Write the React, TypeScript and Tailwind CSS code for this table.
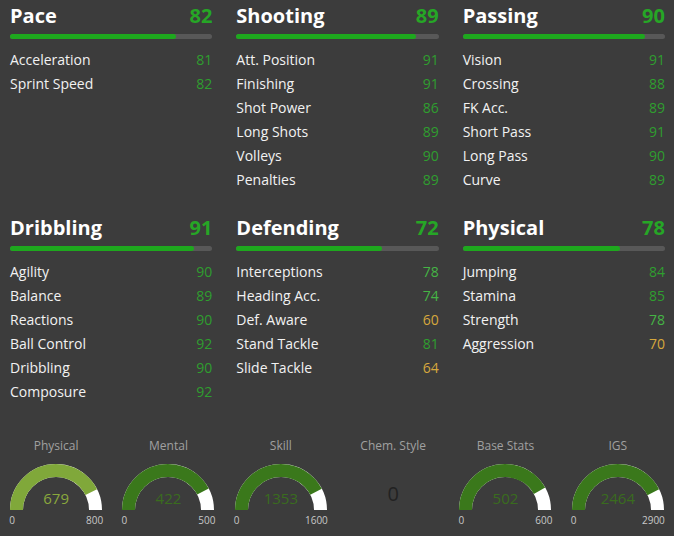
import React from 'react';

type Attr = { name: string; value: number };
type Group = { title: string; value: number; attrs: Attr[] };

const groups: Group[] = [
    { title: 'Pace', value: 82, attrs: [{ name: 'Acceleration', value: 81 }, { name: 'Sprint Speed', value: 82 }] },
    {
        title: 'Shooting', value: 89, attrs: [
            { name: 'Att. Position', value: 91 }, { name: 'Finishing', value: 91 }, { name: 'Shot Power', value: 86 },
            { name: 'Long Shots', value: 89 }, { name: 'Volleys', value: 90 }, { name: 'Penalties', value: 89 },
        ],
    },
    {
        title: 'Passing', value: 90, attrs: [
            { name: 'Vision', value: 91 }, { name: 'Crossing', value: 88 }, { name: 'FK Acc.', value: 89 },
            { name: 'Short Pass', value: 91 }, { name: 'Long Pass', value: 90 }, { name: 'Curve', value: 89 },
        ],
    },
    {
        title: 'Dribbling', value: 91, attrs: [
            { name: 'Agility', value: 90 }, { name: 'Balance', value: 89 }, { name: 'Reactions', value: 90 },
            { name: 'Ball Control', value: 92 }, { name: 'Dribbling', value: 90 }, { name: 'Composure', value: 92 },
        ],
    },
    {
        title: 'Defending', value: 72, attrs: [
            { name: 'Interceptions', value: 78 }, { name: 'Heading Acc.', value: 74 }, { name: 'Def. Aware', value: 60 },
            { name: 'Stand Tackle', value: 81 }, { name: 'Slide Tackle', value: 64 },
        ],
    },
    {
        title: 'Physical', value: 78, attrs: [
            { name: 'Jumping', value: 84 }, { name: 'Stamina', value: 85 }, { name: 'Strength', value: 78 },
            { name: 'Aggression', value: 70 },
        ],
    },
];

const valueColor = (v: number) => {
    if (v >= 80) return 'text-[#2f9e2f]';
    if (v > 70) return 'text-[#45b445]';
    return 'text-[#d6a83c]';
};

type Gauge = { label: string; value: number; max: number; lime?: boolean };

const gauges: (Gauge | null)[] = [
    { label: 'Physical', value: 679, max: 800, lime: true },
    { label: 'Mental', value: 422, max: 500 },
    { label: 'Skill', value: 1353, max: 1600 },
    null,
    { label: 'Base Stats', value: 502, max: 600 },
    { label: 'IGS', value: 2464, max: 2900 },
];

const GaugeView = ({ g }: { g: Gauge }) => {
    const r = 39.5;
    const len = Math.PI * r;
    const filled = (g.value / g.max) * len;
    const color = g.lime ? '#80a83a' : '#3a781b';
    return (
        <div className="flex flex-col items-center">
            <div className="h-4 text-[12px] leading-4 text-[#a0a0a0]">{g.label}</div>
            <div className="relative mt-[9px] h-[47px] w-[94px]">
                <svg width="94" height="47" viewBox="0 0 94 47">
                    <path d={`M 7.5 47 A ${r} ${r} 0 0 1 86.5 47`} fill="none" stroke="#ffffff" strokeWidth="13" />
                    <path
                        d={`M 7.5 47 A ${r} ${r} 0 0 1 86.5 47`}
                        fill="none"
                        stroke={color}
                        strokeWidth="13"
                        strokeDasharray={`${filled} ${len}`}
                    />
                </svg>
                <span className={`absolute inset-x-0 top-[26px] text-center text-[15px] leading-[18px] ${g.lime ? 'text-[#8aa83c]' : 'text-[#3a6c1e]'}`}>
                    {g.value}
                </span>
            </div>
            <div className="mt-[4px] flex w-[94px] justify-between text-[10px] leading-3 text-[#c8c8c8]">
                <span>0</span>
                <span>{g.max}</span>
            </div>
        </div>
    );
};

export default function App() {
    return (
        <div className="h-[536px] w-[674px] overflow-hidden bg-[#3c3c3c] font-['Open_Sans',sans-serif] text-[#f2f2f2]">
            <div className="grid grid-cols-3 items-start gap-x-6 gap-y-[25px] px-[10px] pt-[4px] pr-[9px]">
                {groups.map(group => (
                    <div key={group.title}>
                        <div className="flex h-6 items-center justify-between">
                            <span className="text-[20px] font-bold leading-6 text-white">{group.title}</span>
                            <span className="text-[20px] font-bold leading-6 text-[#26a626]">{group.value}</span>
                        </div>
                        <div className="mt-[6px] h-[5px] w-full rounded-full bg-[#585858]">
                            <div className="h-full rounded-full bg-[#1ea81e]" style={{ width: `${group.value}%` }} />
                        </div>
                        <div className="mt-[8px]">
                            {group.attrs.map(a => (
                                <div key={a.name} className="flex h-6 items-center justify-between text-[14px]">
                                    <span>{a.name}</span>
                                    <span className={valueColor(a.value)}>{a.value}</span>
                                </div>
                            ))}
                        </div>
                    </div>
                ))}
            </div>
            <div className="mt-[35px] grid grid-cols-6">
                {gauges.map((g, i) =>
                    g ? (
                        <GaugeView key={g.label} g={g} />
                    ) : (
                        <div key={i} className="flex flex-col items-center">
                            <div className="h-4 text-[12px] leading-4 text-[#a0a0a0]">Chem. Style</div>
                            <div className="mt-[28px] text-[20px] leading-6 text-[#222222]">0</div>
                        </div>
                    )
                )}
            </div>
        </div>
    );
}
